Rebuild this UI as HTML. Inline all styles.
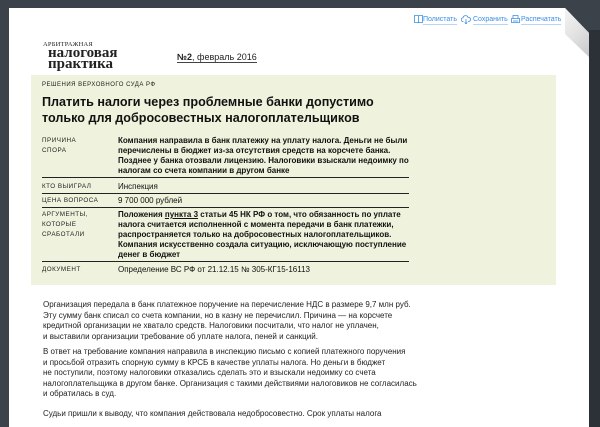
<!DOCTYPE html>
<html><head><meta charset="utf-8"><style>
*{margin:0;padding:0;box-sizing:border-box}
body{width:600px;height:427px;overflow:hidden;background:#3b4249;position:relative;font-family:"Liberation Sans","Noto Sans CJK SC",sans-serif;color:#111}
.rs{position:absolute;left:589px;top:30px;width:11px;height:397px;background:#2b3137}
.page{position:absolute;left:9px;top:8px;width:580px;height:419px;background:#fff;clip-path:polygon(0 0,556px 0,580px 25px,580px 419px,0 419px)}
.fold{position:absolute;left:565px;top:8px;width:24px;height:50px;background:linear-gradient(135deg,#f4f4f4 0%,#e2e2e2 50%,#c8c8c8 100%);clip-path:polygon(0 0,24px 25px,24px 49px,0 26px)}
.links{position:absolute;top:15px;left:413px;font-size:7px;color:#3a8ee6;white-space:nowrap}
.links span{position:absolute;top:0;border-bottom:1px solid #b9d5f3;line-height:9px}
.links svg{position:absolute;top:0}
.logo{position:absolute;left:43px;top:41px;font-family:"Liberation Serif",serif;color:#222}
.box{position:absolute;left:31px;top:75px;width:525px;height:210px;background:#eff2dc}
.sm{font-size:6px;letter-spacing:.5px;color:#222}
h1{position:absolute;left:42px;top:94px;font-size:12.6px;line-height:16px;font-weight:bold;color:#111}
table{position:absolute;left:42px;top:134px;width:367px;border-collapse:collapse}
td{vertical-align:top;font-size:8px;line-height:10px;padding:2px 0 1px}
td.l{width:76px;font-size:6.3px;letter-spacing:.5px;line-height:10px;color:#222}
tr{border-bottom:1.5px solid #222}
tr:last-child{border-bottom:none}
b{font-weight:bold}
.body{position:absolute;left:43px;top:300px;width:520px;font-size:8px;line-height:10.5px;color:#222}
.body p{margin-bottom:5px}
</style></head><body>
<div class="rs"></div>
<div class="page"></div>
<div class="fold"></div>
<div class="links">
<svg style="left:1px" width="9" height="8" viewBox="0 0 9 8"><path d="M.5 .5h3.5l.5 .5.5-.5h3.5v7h-3.5l-.5.5-.5-.5h-3.5z M4.5 1v7" fill="none" stroke="#3a8ee6" stroke-width=".8"/></svg>
<span style="left:10px">Полистать</span>
<svg style="left:48px" width="10" height="9" viewBox="0 0 10 9"><path d="M2.5 6.5h-.5a1.8 1.8 0 0 1 0-3.6 2.6 2.6 0 0 1 5-.6 1.9 1.9 0 0 1 .8 4.2h-.8 M5 4v5 M3.7 7.5 5 8.8 6.3 7.5" fill="none" stroke="#3a8ee6" stroke-width=".8"/></svg>
<span style="left:60px">Сохранить</span>
<svg style="left:98px" width="9" height="9" viewBox="0 0 9 9"><path d="M2 3.5V.5h5v3 M.5 3.5h8v4h-8z M2 6h5" fill="none" stroke="#3a8ee6" stroke-width=".8"/></svg>
<span style="left:108px">Распечатать</span>
</div>
<div class="logo">
<div style="font-size:6.5px;letter-spacing:.2px;line-height:7px">АРБИТРАЖНАЯ</div>
<div style="font-size:15px;font-weight:bold;line-height:10px;margin-left:5px">налоговая</div>
<div style="font-size:15px;font-weight:bold;line-height:12px;margin-left:5px">практика</div>
</div>
<div style="position:absolute;left:177px;top:52px;font-size:9px;color:#222;border-bottom:1px solid #444;line-height:10px"><b>№2</b>, февраль 2016</div>
<div class="box"></div>
<div class="sm" style="position:absolute;left:42px;top:82px">РЕШЕНИЯ ВЕРХОВНОГО СУДА РФ</div>
<h1>Платить налоги через проблемные банки допустимо<br>только для добросовестных налогоплательщиков</h1>
<table>
<tr><td class="l">ПРИЧИНА<br>СПОРА</td><td><b>Компания направила в банк платежку на уплату налога. Деньги не были перечислены в бюджет из-за отсутствия средств на корсчете банка. Позднее у банка отозвали лицензию. Налоговики взыскали недоимку по налогам со счета компании в другом банке</b></td></tr>
<tr><td class="l" style="padding-top:4px">КТО ВЫИГРАЛ</td><td style="padding-top:4px">Инспекция</td></tr>
<tr><td class="l">ЦЕНА ВОПРОСА</td><td>9 700 000 рублей</td></tr>
<tr><td class="l">АРГУМЕНТЫ,<br>КОТОРЫЕ<br>СРАБОТАЛИ</td><td><b>Положения <u>пункта 3</u> статьи 45 НК РФ о том, что обязанность по уплате налога считается исполненной с момента передачи в банк платежки, распространяется только на добросовестных налогоплательщиков. Компания искусственно создала ситуацию, исключающую поступление денег в бюджет</b></td></tr>
<tr><td class="l" style="padding-top:3px">ДОКУМЕНТ</td><td style="padding-top:3px">Определение ВС РФ от 21.12.15 № 305-КГ15-16113</td></tr>
</table>
<div class="body">
<p>Организация передала в банк платежное поручение на перечисление НДС в размере 9,7 млн руб.<br>Эту сумму банк списал со счета компании, но в казну не перечислил. Причина — на корсчете<br>кредитной организации не хватало средств. Налоговики посчитали, что налог не уплачен,<br>и выставили организации требование об уплате налога, пеней и санкций.</p>
<p style="margin-bottom:9px">В ответ на требование компания направила в инспекцию письмо с копией платежного поручения<br>и просьбой отразить спорную сумму в КРСБ в качестве уплаты налога. Но деньги в бюджет<br>не поступили, поэтому налоговики отказались сделать это и взыскали недоимку со счета<br>налогоплательщика в другом банке. Организация с такими действиями налоговиков не согласилась<br>и обратилась в суд.</p>
<p>Судьи пришли к выводу, что компания действовала недобросовестно. Срок уплаты налога</p>
</div>
</body></html>
